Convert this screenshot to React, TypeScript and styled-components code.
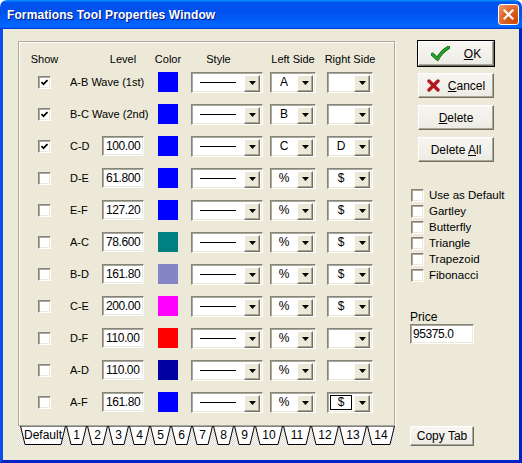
import styled, { createGlobalStyle } from "styled-components";

const GlobalStyle = createGlobalStyle`
    html, body {
        margin: 0;
        padding: 0;
        background: #ffffff;
    }
    body {
        font-family: "Liberation Sans", Arial, sans-serif;
        font-size: 11px;
        color: #000;
    }
`;

const Window = styled.div`
    width: 522px;
    height: 463px;
    display: flex;
    flex-direction: column;
`;

const TitleBar = styled.div`
    height: 29px;
    flex: none;
    display: flex;
    align-items: center;
    justify-content: space-between;
    padding: 0 3px 0 7px;
    background: linear-gradient(180deg, #0997ff, #0053ee 8%, #0050ee 40%, #0066ff 88%, #0066ff 93%, #005bff 95%, #003dd7 96%, #003dd7);
    border-radius: 7px 7px 0 0;
`;

const Title = styled.span`
    font-family: "Liberation Sans", Arial, sans-serif;
    font-weight: bold;
    font-size: 12px;
    letter-spacing: 0.1px;
    color: #fff;
    text-shadow: 1px 1px 0 #0a1883;
`;

const CloseButton = styled.div`
    width: 21px;
    height: 21px;
    box-sizing: border-box;
    border: 1px solid #fff;
    border-radius: 3px;
    background: radial-gradient(circle at 90% 90%, #cc4600 0%, #dc6527 55%, #f09a75 100%);
    display: flex;
    align-items: center;
    justify-content: center;
`;

const Body = styled.div`
    flex: 1;
    background: #ece9d8;
    border-left: 3px solid #0a4ee4;
    border-right: 3px solid #0021c4;
    border-bottom: 3px solid #0021c4;
    padding: 12px 0 0 15px;
    display: grid;
    grid-template-columns: 377px 1fr;
    grid-template-rows: 385px 20px;
    column-gap: 15px;
`;

const Panel = styled.div`
    box-sizing: border-box;
    border: 1px solid #aca899;
    box-shadow: inset 1px 1px 0 #fff, 1px 1px 0 #fff;
    padding: 10px 0 0 19px;
`;

const columns = "32px 32px 56px 33px 79px 57px 46px";

const HeaderRow = styled.div`
    display: grid;
    grid-template-columns: ${columns};
    height: 14px;
    align-items: center;
`;

const HeadCell = styled.div<{ $w: number; $col: number }>`
    grid-column: ${(p) => p.$col};
    width: ${(p) => p.$w}px;
    display: flex;
    justify-content: center;
    white-space: nowrap;
`;

const Row = styled.div`
    display: grid;
    grid-template-columns: ${columns};
    height: 32px;
    align-items: center;
`;

const Label = styled.span`
    white-space: nowrap;
`;

const CheckBox = styled.span`
    width: 13px;
    height: 13px;
    box-sizing: border-box;
    border: 1px solid;
    border-color: #85837a #fff #fff #85837a;
    box-shadow: inset 1px 1px 0 #aca899, inset -1px -1px 0 #ece9d8;
    background: #fff;
    display: flex;
    align-items: center;
    justify-content: center;
`;

const LevelBox = styled.div`
    width: 42px;
    height: 20px;
    box-sizing: border-box;
    border: 1px solid;
    border-color: #85837a #fff #fff #85837a;
    box-shadow: inset 1px 1px 0 #aca899, inset -1px -1px 0 #ece9d8;
    background: #fff;
    padding-left: 3px;
    line-height: 18px;
    font-size: 12px;
    letter-spacing: -0.4px;
`;

const Swatch = styled.div<{ $color: string }>`
    width: 20px;
    height: 20px;
    background: ${(p) => p.$color};
`;

const Combo = styled.div<{ $w: number }>`
    width: ${(p) => p.$w}px;
    height: 21px;
    box-sizing: border-box;
    border: 1px solid;
    border-color: #85837a #fff #fff #85837a;
    box-shadow: inset 1px 1px 0 #aca899, inset -1px -1px 0 #ece9d8;
    background: #fff;
    padding: 2px;
    display: flex;
`;

const ComboText = styled.div<{ $focused?: boolean }>`
    flex: 1;
    display: flex;
    align-items: center;
    justify-content: center;
    box-sizing: border-box;
    margin-right: 2px;
    border: 1px solid ${(p) => (p.$focused ? "#000" : "transparent")};
    font-size: 12px;
`;

const StyleLine = styled.span`
    width: 36px;
    height: 1px;
    background: #000;
`;

const ArrowButton = styled.div`
    width: 16px;
    height: 17px;
    box-sizing: border-box;
    background: #ece9d8;
    border: 1px solid;
    border-color: #fff #716f64 #716f64 #fff;
    box-shadow: inset -1px -1px 0 #aca899;
    display: flex;
    align-items: center;
    justify-content: center;
`;

const Side = styled.div`
    display: flex;
    flex-direction: column;
`;

const Button = styled.div<{ $default?: boolean; $w?: number; $h?: number }>`
    width: ${(p) => p.$w ?? 76}px;
    height: ${(p) => p.$h ?? 25}px;
    box-sizing: border-box;
    background: linear-gradient(#f7f6f2, #ecebe3);
    border: 1px solid;
    border-color: #fff #716f64 #716f64 #fff;
    box-shadow: inset -1px -1px 0 #aca899 ${(p) => (p.$default ? ", 0 0 0 1px #000" : "")};
    display: flex;
    align-items: center;
    justify-content: center;
    gap: 8px;
    font-size: 12px;
    white-space: nowrap;
`;

const ButtonStack = styled.div`
    display: flex;
    flex-direction: column;
    gap: 7px;
    margin-left: 8px;
`;

const Options = styled.div`
    margin-top: 25px;
    margin-left: 1px;
    display: flex;
    flex-direction: column;
`;

const Option = styled.div`
    height: 16px;
    display: flex;
    align-items: center;
    gap: 5px;
    font-size: 11.5px;
`;

const PriceLabel = styled.div`
    margin-top: 27px;
    height: 14px;
    line-height: 14px;
    font-size: 12px;
`;

const PriceBox = styled(LevelBox)`
    width: 64px;
    padding-left: 2px;
`;

const TabStrip = styled.div`
    display: flex;
    padding-left: 2px;
    background-color: #fff;
    background-image: repeating-conic-gradient(#d8d5c8 0% 25%, #ffffff 0% 50%);
    background-size: 2px 2px;
`;

const Tab = styled.div<{ $w: number }>`
    position: relative;
    width: ${(p) => p.$w}px;
    height: 19px;
    display: flex;
    align-items: center;
    justify-content: center;
    font-size: 12px;
`;

const TabShape = styled.svg`
    position: absolute;
    inset: 0;
`;

const TabLabel = styled.span`
    position: relative;
    margin-top: -1px;
`;

const CopyBox = styled.div`
    display: flex;
`;

type RowData = {
    show: boolean;
    name: string;
    level?: string;
    color: string;
    left: string;
    right: string;
    focused?: boolean;
};

const rows: RowData[] = [
    { show: true, name: "A-B Wave (1st)", color: "#0000ff", left: "A", right: "" },
    { show: true, name: "B-C Wave (2nd)", color: "#0000ff", left: "B", right: "" },
    { show: true, name: "C-D", level: "100.00", color: "#0000ff", left: "C", right: "D" },
    { show: false, name: "D-E", level: "61.800", color: "#0000ff", left: "%", right: "$" },
    { show: false, name: "E-F", level: "127.20", color: "#0000ff", left: "%", right: "$" },
    { show: false, name: "A-C", level: "78.600", color: "#008080", left: "%", right: "$" },
    { show: false, name: "B-D", level: "161.80", color: "#8585c6", left: "%", right: "$" },
    { show: false, name: "C-E", level: "200.00", color: "#ff00ff", left: "%", right: "$" },
    { show: false, name: "D-F", level: "110.00", color: "#ff0000", left: "%", right: "" },
    { show: false, name: "A-D", level: "110.00", color: "#0000a0", left: "%", right: "" },
    { show: false, name: "A-F", level: "161.80", color: "#0000ff", left: "%", right: "$", focused: true },
];

const tabs = ["Default", "1", "2", "3", "4", "5", "6", "7", "8", "9", "10", "11", "12", "13", "14"];

function Check({ checked }: { checked: boolean }) {
    return (
        <CheckBox>
            {checked && (
                <svg width="7" height="7" viewBox="0 0 7 7">
                    <polyline points="0.5,3 2.5,5.2 6.5,1" fill="none" stroke="#000" strokeWidth="1.7" />
                </svg>
            )}
        </CheckBox>
    );
}

function Arrow() {
    return (
        <ArrowButton>
            <svg width="7" height="4" viewBox="0 0 7 4">
                <polygon points="0,0 7,0 3.5,4" fill="#000" />
            </svg>
        </ArrowButton>
    );
}

export default function App() {
    return (
        <Window>
            <GlobalStyle />
            <TitleBar>
                <Title>Formations Tool Properties Window</Title>
                <CloseButton>
                    <svg width="11" height="11" viewBox="0 0 11 11">
                        <path d="M1.5 1.5 L9.5 9.5 M9.5 1.5 L1.5 9.5" stroke="#fff" strokeWidth="2.2" strokeLinecap="square" />
                    </svg>
                </CloseButton>
            </TitleBar>

            <Body>
                <Panel>
                    <HeaderRow>
                        <HeadCell $col={1} $w={13}>Show</HeadCell>
                        <HeadCell $col={3} $w={42}>Level</HeadCell>
                        <HeadCell $col={4} $w={20}>Color</HeadCell>
                        <HeadCell $col={5} $w={55}>Style</HeadCell>
                        <HeadCell $col={6} $w={46}>Left Side</HeadCell>
                        <HeadCell $col={7} $w={46}>Right Side</HeadCell>
                    </HeaderRow>

                    {rows.map((r) => (
                        <Row key={r.name}>
                            <Check checked={r.show} />
                            <Label>{r.name}</Label>
                            {r.level ? <LevelBox>{r.level}</LevelBox> : <span />}
                            <Swatch $color={r.color} />
                            <Combo $w={72}>
                                <ComboText><StyleLine /></ComboText>
                                <Arrow />
                            </Combo>
                            <Combo $w={46}>
                                <ComboText>{r.left}</ComboText>
                                <Arrow />
                            </Combo>
                            <Combo $w={46}>
                                <ComboText $focused={r.focused}>{r.right}</ComboText>
                                <Arrow />
                            </Combo>
                        </Row>
                    ))}
                </Panel>

                <Side>
                    <ButtonStack>
                        <Button $default>
                            <svg width="19" height="15" viewBox="0 0 19 15">
                                <path d="M1.5 8.5 L6.5 13 Q10 6 17.5 1.5" fill="none" stroke="#0c6b0c" strokeWidth="3.6" strokeLinecap="round" strokeLinejoin="round" />
                                <path d="M1.5 8.5 L6.5 13 Q10 6 17.5 1.5" fill="none" stroke="#2ea62e" strokeWidth="2" strokeLinecap="round" strokeLinejoin="round" />
                            </svg>
                            <span style={{ marginLeft: 6 }}><u>O</u>K</span>
                        </Button>
                        <Button>
                            <svg width="13" height="13" viewBox="0 0 13 13">
                                <path d="M2 2 L11 11 M11 2 L2 11" stroke="#b3161c" strokeWidth="3.4" strokeLinecap="round" />
                            </svg>
                            <span><u>C</u>ancel</span>
                        </Button>
                        <Button><span><u>D</u>elete</span></Button>
                        <Button><span>Delete <u>A</u>ll</span></Button>
                    </ButtonStack>

                    <Options>
                        {["Use as Default", "Gartley", "Butterfly", "Triangle", "Trapezoid", "Fibonacci"].map((o) => (
                            <Option key={o}>
                                <Check checked={false} />
                                <span>{o}</span>
                            </Option>
                        ))}
                    </Options>

                    <PriceLabel>Price</PriceLabel>
                    <PriceBox>95375.0</PriceBox>
                </Side>

                <TabStrip>
                    {tabs.map((t) => {
                        const w = t === "Default" ? 46 : t.length === 1 ? 21 : 28;
                        return (
                            <Tab key={t} $w={w}>
                                <TabShape width={w} height={19} viewBox={`0 0 ${w} 19`}>
                                    <polygon
                                        points={`0.5,0 5,18.5 ${w - 5},18.5 ${w - 0.5},0`}
                                        fill="#fff"
                                        stroke="#000"
                                        strokeWidth="1"
                                    />
                                </TabShape>
                                <TabLabel>{t}</TabLabel>
                            </Tab>
                        );
                    })}
                </TabStrip>

                <CopyBox>
                    <Button $w={64} $h={20}>Copy Tab</Button>
                </CopyBox>
            </Body>
        </Window>
    );
}
